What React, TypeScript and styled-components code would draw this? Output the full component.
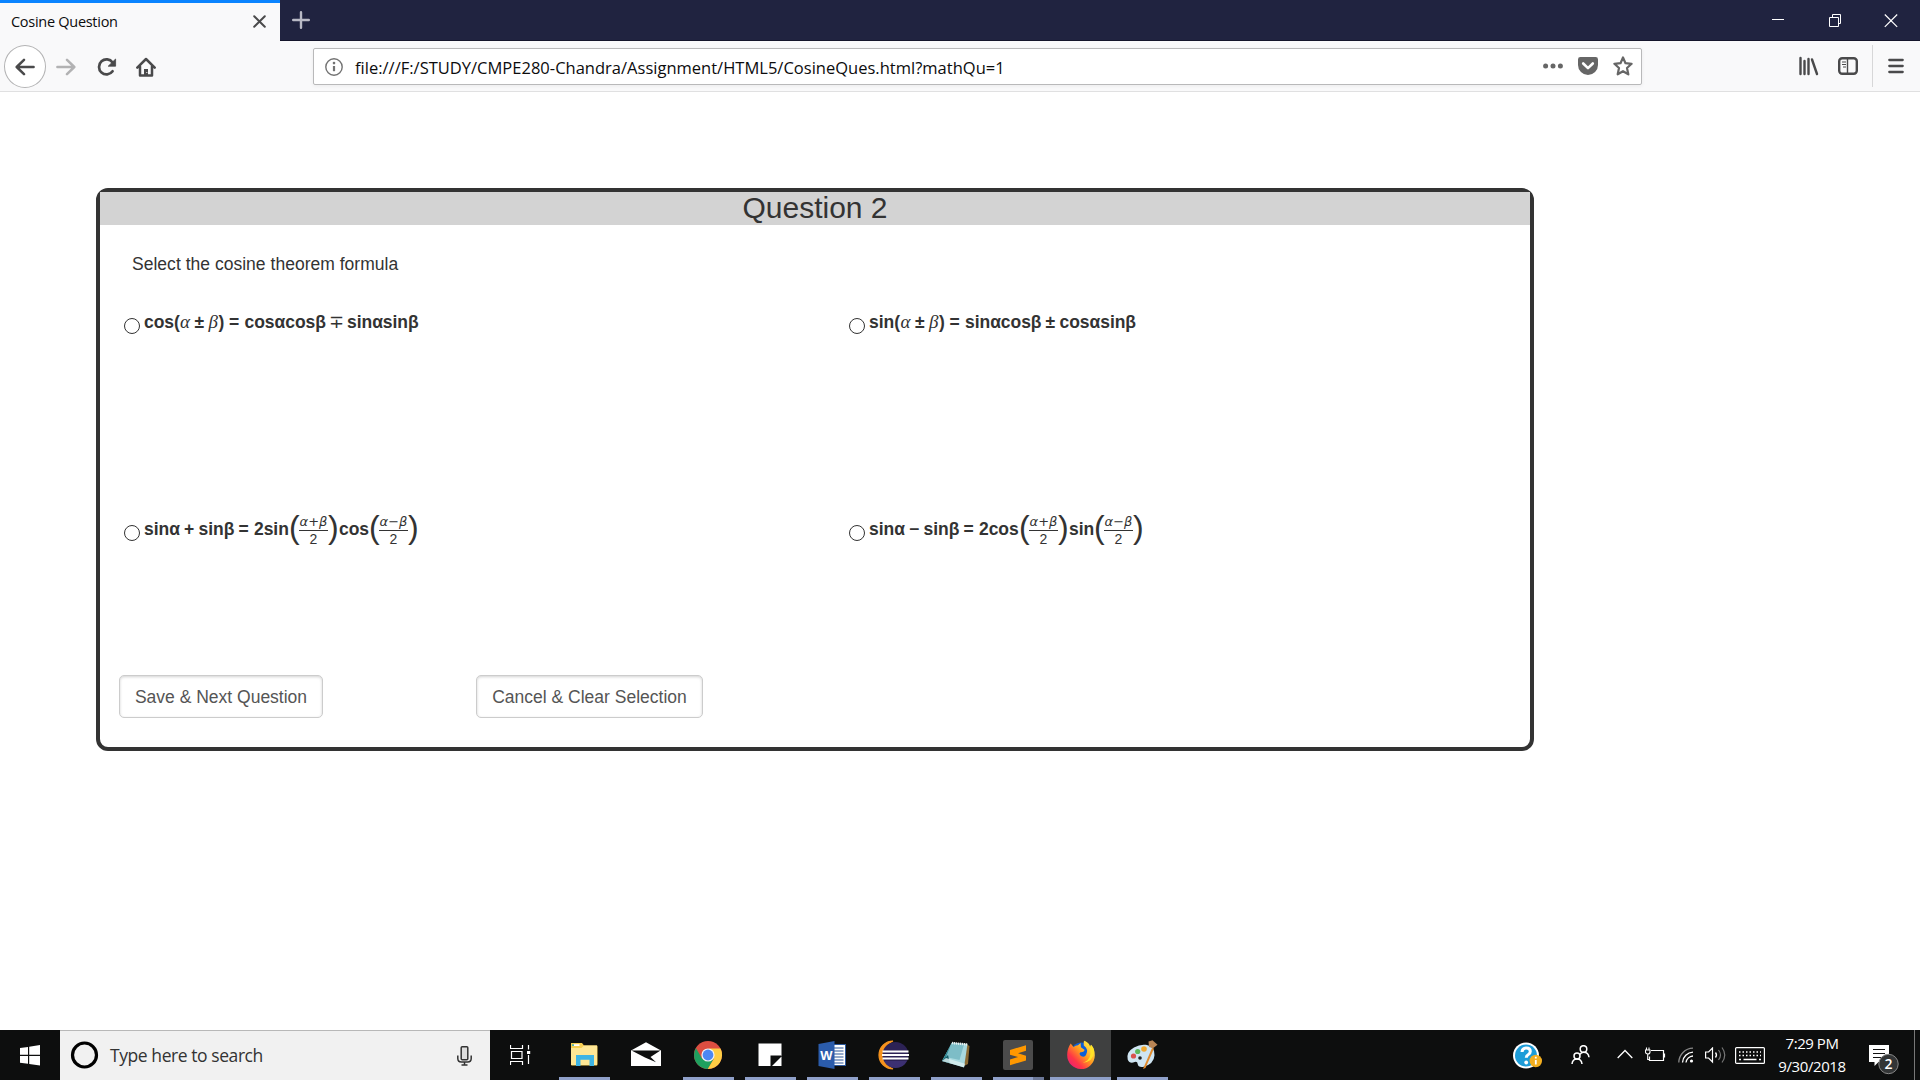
import React from "react";
import styled, { createGlobalStyle, css } from "styled-components";

const ui = `"Open Sans", "Noto Sans", sans-serif`;
const arial = `"Liberation Sans", Arial, sans-serif`;

const Global = createGlobalStyle`
  * { box-sizing: border-box; }
  html, body { margin: 0; padding: 0; background: #fff; overflow: hidden; }
  svg { display: block; flex: none; }
`;

const Screen = styled.div`
  width: 1920px;
  height: 1080px;
  display: flex;
  flex-direction: column;
  background: #fff;
  font-family: ${ui};
`;

/* ---------- Browser chrome ---------- */

const TitleBar = styled.header`
  height: 41px;
  flex: none;
  display: flex;
  background: #202340;
  box-shadow: inset 0 -1px 0 #14152b;
`;

const Tab = styled.div`
  width: 280px;
  height: 41px;
  border-top: 3px solid #0a84ff;
  background: #f9f9fa;
  display: flex;
  align-items: center;
  justify-content: space-between;
  padding: 0 14px 1px 11px;
`;

const Fitted = styled.span<{ $size: number; $spacing?: number; $color?: string }>`
  font-size: ${(p) => p.$size}px;
  letter-spacing: ${(p) => p.$spacing ?? 0}px;
  color: ${(p) => p.$color ?? "#0c0c0d"};
  line-height: 20px;
  white-space: nowrap;
`;

const NewTab = styled.div`
  padding: 11px 0 0 12px;
  flex: 1;
`;

const WindowControls = styled.div`
  display: flex;
  align-items: flex-start;
  padding: 13px 22px 0 0;
  gap: 42px;
`;

const Toolbar = styled.nav`
  height: 51px;
  flex: none;
  display: flex;
  align-items: flex-start;
  background: #f9f9fa;
  border-bottom: 1px solid #e0e0e1;
`;

const NavButtons = styled.div`
  width: 313px;
  display: flex;
  align-items: center;
  padding: 4px 0 0 4px;
`;

const BackButton = styled.div`
  width: 42px;
  height: 43px;
  border: 1px solid #b3b3b4;
  border-radius: 50%;
  background: #fff;
  display: grid;
  place-items: center;
  margin-right: 10px;
`;

const NavIcon = styled.div<{ $right: number }>`
  margin-right: ${(p) => p.$right}px;
`;

const UrlBar = styled.div`
  width: 1329px;
  height: 37px;
  margin-top: 7px;
  border: 1px solid #b9b9ba;
  border-radius: 2px;
  background: #fff;
  box-shadow: 0 1px 4px rgba(0, 0, 0, 0.06);
  display: flex;
  align-items: center;
  padding: 0 8px 0 11px;
`;

const UrlText = styled.div`
  flex: 1;
  padding: 2px 0 0 12px;
  line-height: 1;
`;

const UrlActions = styled.div`
  display: flex;
  align-items: center;
  gap: 15px;
  padding-bottom: 1px;
`;

const RightTools = styled.div`
  flex: 1;
  height: 42px;
  margin-top: 4px;
  display: flex;
  align-items: center;
  padding-left: 157px;
`;

const Divider = styled.div`
  width: 1px;
  height: 42px;
  background: #d7d7d8;
  margin: 0 15px 0 14px;
`;

/* ---------- Page ---------- */

const Page = styled.main`
  flex: 1;
  padding: 96px 0 0 96px;
  font-family: ${arial};
  color: #333;
`;

const Card = styled.section`
  width: 1438px;
  height: 563px;
  border: 4px solid #333;
  border-radius: 12px;
`;

const CardTitle = styled.h1`
  margin: 0;
  height: 33px;
  line-height: 32px;
  font-size: 30px;
  font-weight: 400;
  text-align: center;
  background: #d3d3d3;
`;

const Prompt = styled.p`
  margin: 0;
  padding: 27px 0 0 32px;
  height: 81px;
  font-size: 17.5px;
  line-height: 24px;
  letter-spacing: 0.02px;
`;

const Options = styled.div`
  display: grid;
  grid-template-columns: 725px 1fr;
  grid-template-rows: 207px 162px;
  padding-left: 24px;
`;

const Option = styled.label`
  display: flex;
  align-items: flex-start;
`;

const Radio = styled.input`
  appearance: none;
  width: 16px;
  height: 16px;
  margin: 12px 4px 0 0;
  border: 1px solid #333;
  border-radius: 50%;
  background: #fff;
`;

const Formula = styled.span`
  display: flex;
  align-items: baseline;
  font-size: 17.5px;
  font-weight: 700;
  line-height: 24px;
  letter-spacing: -0.05px;
  padding-top: 4px;
  white-space: pre;
`;

const Piece = styled.span<{ $w: number; $kind?: "var" | "thin" }>`
  width: ${(p) => p.$w}px;
  flex: none;
  ${(p) =>
    p.$kind === "var" &&
    css`
      font-family: "Liberation Serif", serif;
      font-style: italic;
      font-weight: 400;
      font-size: 19px;
      line-height: 20px;
    `}
  ${(p) =>
    p.$kind === "thin" &&
    css`
      font-family: "DejaVu Sans", sans-serif;
      font-weight: 400;
      font-size: 18px;
      line-height: 18px;
      margin-left: -1px;
    `}
`;

const Paren = styled.span<{ $w: number }>`
  width: ${(p) => p.$w}px;
  flex: none;
  align-self: flex-start;
  font-size: 32px;
  font-weight: 400;
  line-height: 20px;
`;

const Fraction = styled.span`
  width: 29px;
  height: 31px;
  margin-top: -1px;
  flex: none;
  align-self: flex-start;
  display: flex;
  flex-direction: column;
  align-items: stretch;
  text-align: center;
  font-weight: 400;
  letter-spacing: 0;
`;

const Numerator = styled.span`
  height: 15px;
  line-height: 12px;
  border-bottom: 1px solid #333;
  font-family: "DejaVu Sans", sans-serif;
  font-style: italic;
  font-size: 13px;
`;

const Denominator = styled.span`
  font-size: 14px;
  line-height: 16px;
`;

const Buttons = styled.div`
  display: flex;
  gap: 153px;
  padding-left: 19px;
`;

const Button = styled.button<{ $w: number }>`
  width: ${(p) => p.$w}px;
  height: 43px;
  padding: 0;
  border: 1px solid #ccc;
  border-radius: 5px;
  background: #fff;
  box-shadow: inset 0 1px 3px rgba(0, 0, 0, 0.18);
  font: 400 17.5px/24px ${arial};
  color: #555;
`;

/* ---------- Taskbar ---------- */

const Taskbar = styled.footer`
  height: 50px;
  flex: none;
  display: flex;
  background: #0d0e0e;
`;

const Start = styled.div`
  width: 60px;
  padding: 15px 0 0 20px;
`;

const Search = styled.div`
  width: 430px;
  background: #f1f1f1;
  border-top: 1px solid #b8b8b8;
  display: flex;
  align-items: center;
  padding: 0 18px 0 10px;
`;

const SearchText = styled.div`
  flex: 1;
  padding-left: 11px;
`;

const TaskView = styled.div`
  width: 63px;
  padding: 15px 0 0 20px;
`;

const AppCell = styled.div<{ $active?: boolean; $running?: boolean; $stacked?: boolean }>`
  width: ${(p) => (p.$active ? 61 : 62)}px;
  height: 50px;
  margin-left: ${(p) => (p.$active ? 1 : 0)}px;
  display: flex;
  flex-direction: column;
  align-items: center;
  padding-top: 10px;
  background: ${(p) => (p.$active ? "#3f4040" : "transparent")};
  &::after {
    content: "";
    width: ${(p) => (p.$active ? 61 : 51)}px;
    height: 3px;
    margin-top: 7px;
    background: ${(p) =>
      !p.$running
        ? "transparent"
        : p.$stacked
          ? "linear-gradient(90deg, #8fa0c9 40px, #6c7898 40px)"
          : "#8fa0c9"};
  }
`;

const Tray = styled.div`
  flex: 1;
  display: flex;
  padding-left: 340px;
`;

const Slot = styled.div<{ $w: number; $top: number }>`
  width: ${(p) => p.$w}px;
  padding-top: ${(p) => p.$top}px;
  flex: none;
`;

const Clock = styled.div`
  width: 94px;
  height: 50px;
  margin-right: 10px;
  padding-top: 3px;
  display: flex;
  flex-direction: column;
  align-items: center;
  flex: none;
  gap: 3px;
`;

const ShowDesktop = styled.div`
  width: 6px;
  flex: none;
  border-left: 1px solid #777;
`;

/* ---------- Icons ---------- */

const line = { fill: "none", strokeLinecap: "round", strokeLinejoin: "round" } as const;

const Svg = ({ w, h, children }: { w: number; h: number; children: React.ReactNode }) => (
  <svg width={w} height={h} viewBox={`0 0 ${w} ${h}`}>
    {children}
  </svg>
);

const ArrowLeft = () => (
  <Svg w={20} h={18}>
    <path d="M18.6 9H2M9 1.8 1.7 9 9 16.2" stroke="#4a4a4b" strokeWidth="2.5" {...line} />
  </Svg>
);
const ArrowRight = () => (
  <Svg w={20} h={18}>
    <path d="M1.4 9H18M11 1.8 18.3 9 11 16.2" stroke="#b2b2b3" strokeWidth="2.5" {...line} />
  </Svg>
);
const Reload = () => (
  <Svg w={20} h={20}>
    <path d="M15.6 14.3A7.5 7.5 0 1 1 15.6 5.5" stroke="#4a4a4b" strokeWidth="2.7" {...line} />
    <path d="M18.6 2v7.2h-7.4z" fill="#4a4a4b" stroke="#4a4a4b" strokeWidth=".8" strokeLinejoin="round" />
  </Svg>
);
const Home = () => (
  <Svg w={20} h={20}>
    <path d="M1.3 10.6 10 2l8.7 8.6M4 9.5v9h12v-9" stroke="#4a4a4b" strokeWidth="2.5" {...line} />
    <path d="M8 18v-6h4v6" fill="#4a4a4b" />
    <path d="M10.8 15v1" stroke="#eee" strokeWidth="1" />
  </Svg>
);
const Info = () => (
  <Svg w={18} h={18}>
    <circle cx="9" cy="9" r="8.2" fill="none" stroke="#737373" strokeWidth="1.4" />
    <path d="M9 8v5.2" stroke="#737373" strokeWidth="2.2" />
    <circle cx="9" cy="5.1" r="1.3" fill="#737373" />
  </Svg>
);
const Dots = () => (
  <Svg w={20} h={20}>
    <circle cx="2.6" cy="10" r="2.5" fill="#666" />
    <circle cx="10" cy="10" r="2.5" fill="#666" />
    <circle cx="17.4" cy="10" r="2.5" fill="#666" />
  </Svg>
);
const Pocket = () => (
  <Svg w={20} h={20}>
    <path d="M2.4 1h15.2A2.4 2.4 0 0 1 20 3.4V9a10 10 0 0 1-20 0V3.4A2.4 2.4 0 0 1 2.4 1z" fill="#666" />
    <path d="m5.2 7.5 4.8 4.6 4.8-4.6" stroke="#fff" strokeWidth="2.6" {...line} />
  </Svg>
);
const Star = () => (
  <Svg w={20} h={20}>
    <path d="m10 1.5 2.5 5.7 6.1.6-4.6 4.2 1.3 6.3L10 15.2l-5.3 3.1L6 12 1.4 7.8l6.1-.6z" stroke="#666" strokeWidth="2.2" {...line} />
  </Svg>
);
const Library = () => (
  <Svg w={20} h={20}>
    <path d="M1.5 2v16M5.5 5v13M9.5 3v15M13 3.5 18 18" stroke="#4a4a4b" strokeWidth="2.4" {...line} />
  </Svg>
);
const Sidebar = () => (
  <Svg w={20} h={20}>
    <rect x="1.2" y="2.2" width="17.6" height="15.6" rx="3" stroke="#4a4a4b" strokeWidth="2.4" fill="none" />
    <path d="M9.5 3v14" stroke="#4a4a4b" strokeWidth="1.4" />
    <path d="M4 6h4M4 8.5h4M5 11h3" stroke="#4a4a4b" strokeWidth="1.2" />
  </Svg>
);
const Menu = () => (
  <Svg w={16} h={20}>
    <path d="M1.3 4h13.4M1.3 10h13.4M1.3 16h13.4" stroke="#4a4a4b" strokeWidth="2.3" {...line} />
  </Svg>
);

const Explorer = () => (
  <Svg w={30} h={30}>
    <path d="M2 3h11l2 2.5h12.5q1 0 1 1V24q0 1.5-1 1.5H3q-1 0-1-1.5z" fill="#f8cf52" />
    <path d="M2 8h10.5l2.5-2.5h13V25H2z" fill="#ffe795" />
    <path d="M4.5 4.2h6v1.8h-6z" fill="#fff" />
    <path d="M3 4.2h2V6H3z" fill="#54b9ad" />
    <path d="M7 26V15h18v11h-4.5v-6.3h-9V26z" fill="#3eb4e4" />
  </Svg>
);
const Mail = () => (
  <Svg w={32} h={30}>
    <path d="M1 10.5 16 2.3l15 8.2V26H1z" fill="#fff" />
    <path d="M1.5 10.5h29L20.5 17l5.5 5.2-11-4.7z" fill="#0d0e0e" />
  </Svg>
);
const Chrome = () => (
  <Svg w={30} h={30}>
    <circle cx="15" cy="15" r="14" fill="#dc4e41" />
    <path d="M2.9 8A14 14 0 0 0 14.8 29L21 18.5H9z" fill="#1fa05f" />
    <path d="M27.5 8.6A14 14 0 0 1 14.8 29L21 18.5 16 8.6z" fill="#fecd45" />
    <circle cx="15" cy="15" r="6.6" fill="#f4f4f4" />
    <circle cx="15" cy="15" r="5.4" fill="#4b87f3" />
  </Svg>
);
const Sticky = () => (
  <Svg w={30} h={30}>
    <path d="M3.5 3.5h23v12l-10.5 10.5H3.5z" fill="#fff" />
    <path d="M15.5 15.5h11V26h-11z" fill="#0d0e0e" />
    <path d="M26.5 16.5V26H17z" fill="#fff" />
  </Svg>
);
const Word = () => (
  <Svg w={30} h={30}>
    <rect x="16" y="4.5" width="12.5" height="21" fill="#fff" stroke="#2b579a" />
    <path d="M17 8h9.500M17 11h9.5M17 14h9.5M17 17h9.5M17 20h9.5M17 23h9.5" stroke="#2b579a" strokeWidth="1.2" />
    <path d="M1.5 4 17.5 1v28l-16-3z" fill="#2b5cab" />
    <text x="9.5" y="20" fontFamily="Liberation Sans, sans-serif" fontWeight="700" fontSize="13" textAnchor="middle" fill="#fff">W</text>
  </Svg>
);
const Eclipse = () => (
  <Svg w={32} h={30}>
    <path d="M15 1A14 14 0 0 0 15 29 15 15 0 0 1 15 1z" fill="#f7941e" stroke="#f7941e" strokeWidth="1.2" />
    <circle cx="17.5" cy="15" r="13" fill="#2c2255" />
    <path d="M6 21a13 13 0 0 0 23 0z" fill="#473a86" opacity=".6" />
    <path d="M4.5 11.5h26M4 15h27M4.5 18.5h26" stroke="#fff" strokeWidth="1.9" />
  </Svg>
);
const Notepad = () => (
  <Svg w={30} h={30}>
    <path d="M24 3.5 28.5 6 27 24l-4 2z" fill="#8a6a34" />
    <path d="M11 2.5 26.5 4 23 27.5 1 21z" fill="#a8d9df" />
    <path d="M11 2.5 5 20l-4 1z" fill="#2d8690" />
    <path d="M10.5 3 5 17l13.5 3L23 4.5z" fill="#7dbdc7" />
    <path d="M1 21l6-6 2 8.5z" fill="#135d68" />
    <path d="m1 21 22 6.2 1-3.5L5 18z" fill="#d8edf0" opacity=".85" />
    <path d="m11 3 15.5 1.5" stroke="#e8eeee" strokeWidth="2.4" strokeDasharray="1.2 .8" />
  </Svg>
);
const Sublime = () => (
  <Svg w={30} h={30}>
    <rect width="30" height="30" rx="2" fill="#4b4b4b" />
    <path d="M23 5.2v5.600L15 13.300l8 2.400v4.800L7 25.200v-5.600l8-2.500-8-2.400V10z" fill="#ff9800" />
  </Svg>
);
const Firefox = () => (
  <Svg w={30} h={30}>
    <defs>
      <linearGradient id="fx" x1="1" y1="0" x2="0" y2="1">
        <stop offset=".1" stopColor="#fff44f" />
        <stop offset=".45" stopColor="#ff9a1f" />
        <stop offset=".7" stopColor="#ff3647" />
        <stop offset="1" stopColor="#e31587" />
      </linearGradient>
    </defs>
    <circle cx="15.5" cy="13.5" r="11" fill="#0a5fd8" />
    <path d="M4.7 3.5 7.5 7q2-1.5 4.5-1.7L14.6 3l.3 4.2 3.8 2.8q-1 2.5-4.2 2.2-2 1.5.5 3.8 3.5 1.7 5-1 3-6-2.2-9.5Q17.5 3 18 .8q3 .7 5 3.2l1.2 3 .8-2.2q4 4 3.8 10.7A13.8 13.8 0 0 1 1.2 15q0-6.5 3.5-11.5z" fill="url(#fx)" />
    <path d="M18 .8q7 5 6.5 13-.7 7-8 9 11-1 11.5-11Q27.5 7 25 4.8L24.2 7Q21 1.5 18 .8z" fill="#ffe226" />
  </Svg>
);
const Paint = () => (
  <Svg w={32} h={30}>
    <path d="M20 4.8q9 1.5 8.5 10.5T17 27q-5 .5-5.3-3-.3-2.8-3-2-5 2.3-7-2.5Q0 12 8 7.5 14 4 20 4.8z" fill="#cfe5f2" />
    <circle cx="7.5" cy="16" r="2.6" fill="#d9534f" />
    <circle cx="11.7" cy="11.5" r="2.6" fill="#5cb85c" />
    <circle cx="18" cy="9" r="2.8" fill="#f0a830" />
    <circle cx="14" cy="18" r="1.8" fill="#222" />
    <path d="M26 8 17 29l2.5-1L28 8.5z" fill="#e08a2c" />
    <path d="m22.5 1.5 4-1.2 5 4.5-4.5 3.5-4-1.3z" fill="#b98555" />
  </Svg>
);

const HelpTray = () => (
  <Svg w={30} h={28}>
    <circle cx="13" cy="13.5" r="13" fill="#fff" />
    <circle cx="13" cy="13.5" r="11" fill="#1d9cd8" />
    <path d="M9 10q.3-4 4.300-4 4 0 4 3.500 0 2-2.200 3.300-1.800 1-1.800 3" fill="none" stroke="#fff" strokeWidth="3" />
    <circle cx="13.2" cy="20.5" r="1.9" fill="#fff" />
    <circle cx="22.8" cy="19" r="6.2" fill="#f3ae1f" />
    <path d="M22.8 18v4.5M22.8 14.8v1.8" stroke="#fff" strokeWidth="1.8" />
  </Svg>
);
const People = () => (
  <Svg w={19} h={20}>
    <g fill="none" stroke="#fff" strokeWidth="1.5">
      <circle cx="12.5" cy="4" r="3.3" />
      <circle cx="6" cy="11" r="3" />
      <path d="M1 19q.5-5 5-5t5 5M9 9.5q1-2.2 3.500-2.200 5 0 5.500 5" />
    </g>
  </Svg>
);

const APPS = [
  { id: "explorer", Icon: Explorer, running: true },
  { id: "mail", Icon: Mail, running: false },
  { id: "chrome", Icon: Chrome, running: true },
  { id: "sticky", Icon: Sticky, running: true },
  { id: "word", Icon: Word, running: true },
  { id: "eclipse", Icon: Eclipse, running: true },
  { id: "notepad", Icon: Notepad, running: true },
  { id: "sublime", Icon: Sublime, running: true, stacked: true },
  { id: "firefox", Icon: Firefox, running: true, active: true },
  { id: "paint", Icon: Paint, running: true },
];

const Half = ({ op }: { op: string }) => (
  <>
    <Paren $w={10}>(</Paren>
    <Fraction>
      <Numerator>α{op}β</Numerator>
      <Denominator>2</Denominator>
    </Fraction>
    <Paren $w={11}>)</Paren>
  </>
);

export default function App() {
  return (
    <Screen>
      <Global />
      <TitleBar>
        <Tab>
          <Fitted $size={14.5} $spacing={-0.28}>Cosine Question</Fitted>
          <Svg w={13} h={13}>
            <path d="m1.2 1.2 10.600 10.600M11.800 1.200 1.200 11.800" stroke="#4a4a4b" strokeWidth="2" {...line} />
          </Svg>
        </Tab>
        <NewTab>
          <Svg w={18} h={18}>
            <path d="M9 1.2v15.6M1.2 9h15.6" stroke="#b9bac6" strokeWidth="2.4" {...line} />
          </Svg>
        </NewTab>
        <WindowControls>
          <Svg w={14} h={14}><path d="M0 6.5h12" stroke="#fff" /></Svg>
          <Svg w={14} h={15}>
            <path d="M1.500 4.500h9v9h-9zM4.500 4V1.500h8v9H11" stroke="#fff" fill="none" />
          </Svg>
          <Svg w={14} h={15}><path d="m.8 1.500 12.400 12.400M13.200 1.500.8 13.900" stroke="#fff" strokeWidth="1.2" /></Svg>
        </WindowControls>
      </TitleBar>

      <Toolbar>
        <NavButtons>
          <BackButton><ArrowLeft /></BackButton>
          <NavIcon $right={21}><ArrowRight /></NavIcon>
          <NavIcon $right={19}><Reload /></NavIcon>
          <NavIcon $right={0}><Home /></NavIcon>
        </NavButtons>
        <UrlBar>
          <Info />
          <UrlText>
            <Fitted $size={16.5} $spacing={0.01}>file:///F:/STUDY/CMPE280-Chandra/Assignment/HTML5/CosineQues.html?mathQu=1</Fitted>
          </UrlText>
          <UrlActions><Dots /><Pocket /><Star /></UrlActions>
        </UrlBar>
        <RightTools>
          <NavIcon $right={19}><Library /></NavIcon>
          <Sidebar />
          <Divider />
          <Menu />
        </RightTools>
      </Toolbar>

      <Page>
        <Card>
          <CardTitle>Question 2</CardTitle>
          <Prompt>Select the cosine theorem formula</Prompt>
          <Options>
            <Option>
              <Radio type="radio" name="formula" />
              <Formula>
                <Piece $w={36}>cos(</Piece>
                <Piece $w={14.5} $kind="var">α</Piece>
                <Piece $w={14}>±</Piece>
                <Piece $w={10} $kind="var">β</Piece>
                <Piece $w={10.5}>)</Piece>
                <Piece $w={15.5}>=</Piece>
                <Piece $w={85.5}>cosαcosβ</Piece>
                <Piece $w={18} $kind="thin">∓</Piece>
                <Piece $w={73}>sinαsinβ</Piece>
              </Formula>
            </Option>
            <Option>
              <Radio type="radio" name="formula" />
              <Formula>
                <Piece $w={31.5}>sin(</Piece>
                <Piece $w={14.5} $kind="var">α</Piece>
                <Piece $w={14}>±</Piece>
                <Piece $w={10} $kind="var">β</Piece>
                <Piece $w={10.5}>)</Piece>
                <Piece $w={15.5}>=</Piece>
                <Piece $w={80.5}>sinαcosβ</Piece>
                <Piece $w={14}>±</Piece>
                <Piece $w={77}>cosαsinβ</Piece>
              </Formula>
            </Option>
            <Option>
              <Radio type="radio" name="formula" />
              <Formula>
                <Piece $w={40}>sinα</Piece>
                <Piece $w={14.5}>+</Piece>
                <Piece $w={40}>sinβ</Piece>
                <Piece $w={15.5}>=</Piece>
                <Piece $w={35}>2sin</Piece>
                <Half op="+" />
                <Piece $w={30}>cos</Piece>
                <Half op="−" />
              </Formula>
            </Option>
            <Option>
              <Radio type="radio" name="formula" />
              <Formula>
                <Piece $w={40}>sinα</Piece>
                <Piece $w={14.5}>−</Piece>
                <Piece $w={40}>sinβ</Piece>
                <Piece $w={15.5}>=</Piece>
                <Piece $w={40}>2cos</Piece>
                <Half op="+" />
                <Piece $w={25}>sin</Piece>
                <Half op="−" />
              </Formula>
            </Option>
          </Options>
          <Buttons>
            <Button $w={204}>Save &amp; Next Question</Button>
            <Button $w={227}>Cancel &amp; Clear Selection</Button>
          </Buttons>
        </Card>
      </Page>

      <Taskbar>
        <Start>
          <Svg w={20} h={21}>
            <path d="M0 3 8 1.900V9.700H0zM9.200 1.700 20 0v9.700H9.200zM0 10.900h8v7.900L0 17.700zM9.200 10.900H20v9.700L9.200 19z" fill="#fff" />
          </Svg>
        </Start>
        <Search>
          <Svg w={29} h={29}>
            <circle cx="14.5" cy="14" r="12" fill="none" stroke="#000" strokeWidth="3.2" />
          </Svg>
          <SearchText>
            <Fitted $size={17.5} $color="#333" $spacing={-0.43}>Type here to search</Fitted>
          </SearchText>
          <Svg w={15} h={20}>
            <rect x="4.2" y=".8" width="6.6" height="13" rx="1" fill="#ddd" stroke="#333" strokeWidth="1.5" />
            <path d="M.8 9.500v3q0 3.500 3.500 3.500h6.400q3.500 0 3.500-3.500v-3M7.500 16v3M4.500 19h6" fill="none" stroke="#333" strokeWidth="1.5" />
          </Svg>
        </Search>
        <TaskView>
          <Svg w={21} h={20}>
            <path d="M.5 0v3.500h12V0M.5 20v-3.500h12V20M1.500 6.500h10.500v7H1.500zM18.500 0v4.500M18.500 10v9" fill="none" stroke="#fff" strokeWidth="1.2" />
            <rect x="17" y="6" width="3.2" height="3" fill="#fff" />
          </Svg>
        </TaskView>
        {APPS.map(({ id, Icon, running, active, stacked }) => (
          <AppCell key={id} $running={running} $active={active} $stacked={stacked}>
            <Icon />
          </AppCell>
        ))}
        <Tray>
          <Slot $w={58} $top={12}><HelpTray /></Slot>
          <Slot $w={46} $top={15}><People /></Slot>
          <Slot $w={28} $top={19}>
            <Svg w={16} h={10}><path d="m.7 9 7.300-7.500L15.300 9" fill="none" stroke="#fff" strokeWidth="1.3" /></Svg>
          </Slot>
          <Slot $w={33} $top={17}>
            <Svg w={21} h={16}>
              <path d="M6 3.5h12.500v10H4.500v-4M19.500 6.500v4" fill="none" stroke="#fff" strokeWidth="1.200" />
              <path d="M.5 3h4.500v2q0 2-2.200 2T.5 5zM1.500 3V.5M4 3V.5M2.700 7v5.500h2" fill="none" stroke="#fff" strokeWidth="1.100" />
            </Svg>
          </Slot>
          <Slot $w={27} $top={17}>
            <Svg w={16} h={17}>
              <g fill="none" strokeWidth="1.3">
                <path d="M.8 15.500A14.500 14.500 0 0 1 15 1.200" stroke="#888" />
                <path d="M4.500 15.500A11 11 0 0 1 15 5.200M8 15.500a7.500 7.500 0 0 1 7-6.500" stroke="#fff" />
              </g>
              <circle cx="13.5" cy="14" r="1.6" fill="#fff" />
            </Svg>
          </Slot>
          <Slot $w={30} $top={17}>
            <Svg w={21} h={17}>
              <path d="M.6 5h3L7.500 1v14L3.600 11h-3z" fill="none" stroke="#fff" strokeWidth="1.2" />
              <path d="M10.500 5.500q2 2.500 0 5" fill="none" stroke="#fff" strokeWidth="1.3" />
              <path d="M13.500 3q4 5 0 10M17 .5q5.500 7.500 0 15" fill="none" stroke="#777" strokeWidth="1.2" />
            </Svg>
          </Slot>
          <Slot $w={30} $top={17}>
            <Svg w={30} h={17}>
              <rect x=".6" y=".6" width="28.8" height="15.8" rx="1" fill="none" stroke="#fff" strokeWidth="1.2" />
              <path d="M4 5h22M4 8.500h22" stroke="#fff" strokeWidth="1.5" strokeDasharray="1.5 2" />
              <path d="M4 12.500h2M8.500 12.500h13M24 12.500h2" stroke="#fff" strokeWidth="1.3" />
            </Svg>
          </Slot>
          <Clock>
            <Fitted $size={15} $color="#fff" $spacing={-0.45}>7:29 PM</Fitted>
            <Fitted $size={15} $color="#fff" $spacing={-0.4}>9/30/2018</Fitted>
          </Clock>
          <Slot $w={45} $top={15}>
            <Svg w={31} h={31}>
              <path d="M0 0h20v17H9.500L5.500 21v-4H0z" fill="#fff" />
              <path d="M4 4.500h12M4 8.500h12M4 12.500h8" stroke="#111" strokeWidth="1.2" />
              <circle cx="19.5" cy="19" r="9.7" fill="#333536" stroke="#888" />
              <text x="19.5" y="24" textAnchor="middle" fontFamily="Open Sans, sans-serif" fontWeight="600" fontSize="14" fill="#fff">2</text>
            </Svg>
          </Slot>
          <ShowDesktop />
        </Tray>
      </Taskbar>
    </Screen>
  );
}
